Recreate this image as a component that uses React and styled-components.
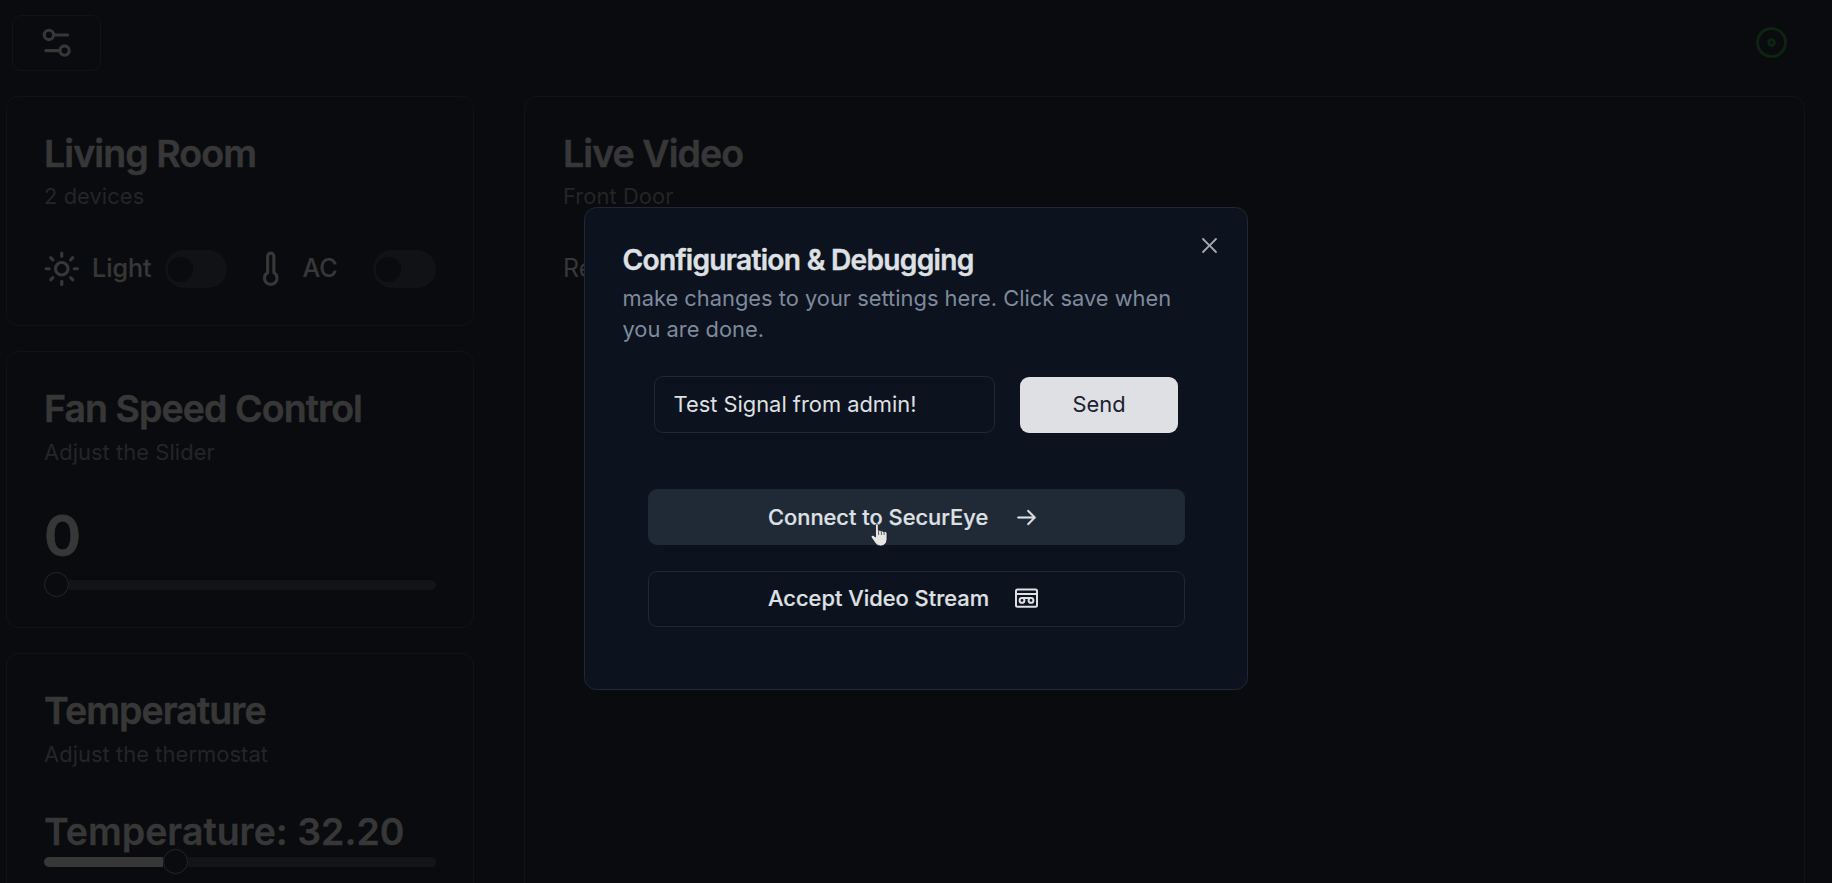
import React from "react";
import styled, { createGlobalStyle } from "styled-components";
import { Settings2, Sun, Thermometer } from "lucide-react";
import { RxCross2, RxArrowRight } from "react-icons/rx";

const Global = createGlobalStyle`
  * { box-sizing: border-box; }
  html, body { margin: 0; background: #0a0b0e; }
  body { font-family: Inter, "Liberation Sans", sans-serif; height: 883px; overflow: hidden; color: #373737; }
  button, input { font: inherit; color: inherit; }
`;

const Page = styled.div`
  height: 883px;
  overflow: hidden;
  padding: 15px 27px 0 6px;
`;
const TopBar = styled.header`
  display: flex;
  justify-content: space-between;
  align-items: flex-start;
  height: 81px;
  padding: 0 18px 0 6px;
`;
const MenuButton = styled.button`
  width: 89px;
  height: 56px;
  padding: 0;
  display: flex;
  align-items: center;
  justify-content: center;
  background: none;
  border: 1px solid #121316;
  border-radius: 9px;
`;
const Status = styled.svg`
  width: 31px;
  height: 31px;
  margin-top: 11.5px;
`;
const Columns = styled.main`
  display: flex;
  gap: 50px;
`;
const Sidebar = styled.div`
  width: 468px;
  display: flex;
  flex-direction: column;
  gap: 25px;
`;
const Card = styled.section`
  flex: ${(p) => (p.$grow ? 1 : "none")};
  height: ${(p) => p.$h}px;
  padding: 38px 37px 37px ${(p) => (p.$grow ? 38 : 37)}px;
  border: 1px solid #121316;
  border-radius: 12.5px;
`;
const Title = styled.h3`
  margin: 0;
  font-size: 37.5px;
  line-height: 38px;
  font-weight: 600;
  letter-spacing: -0.0245em;
  -webkit-text-stroke: 0.5px currentColor;
`;
const Subtitle = styled.p`
  margin: ${(p) => p.$mt || 9}px 0 0;
  font-size: 21.875px;
  line-height: 31px;
  letter-spacing: 0.08px;
  color: #242527;
`;
const Devices = styled.div`
  display: flex;
  align-items: center;
  height: 38px;
  margin-top: 38px;
`;
const LightIcon = styled(Sun)`
  margin-left: -1px;
`;
const DeviceName = styled.span`
  font-size: 25px;
  line-height: 37px;
  padding-bottom: 1px;
  font-weight: 500;
  -webkit-text-stroke: 0.2px currentColor;
  width: ${(p) => p.$w}px;
  margin-left: ${(p) => p.$ml}px;
`;
const Toggle = styled.span`
  width: ${(p) => p.$w}px;
  height: 38px;
  padding: 0 3px;
  display: flex;
  align-items: center;
  border-radius: 19px;
  background: #111215;
  margin-right: ${(p) => p.$mr || 0}px;
  &::before {
    content: "";
    width: 25px;
    height: 25px;
    border-radius: 50%;
    background: #0a0b0e;
  }
`;
const BigValue = styled.div`
  margin-top: 37px;
  font-size: 56.25px;
  line-height: 62.5px;
  font-weight: 600;
  -webkit-text-stroke: 0.8px currentColor;
`;
const Reading = styled.div`
  margin-top: 41px;
  font-size: 37.5px;
  line-height: 41px;
  font-weight: 600;
  -webkit-text-stroke: 0.3px currentColor;
`;
const Slider = styled.div`
  display: flex;
  align-items: center;
  height: 25px;
  margin-top: ${(p) => p.$mt}px;
`;
const Range = styled.span`
  width: ${(p) => p.$w}px;
  height: 10px;
  border-radius: 5px 0 0 5px;
  background: #373737;
`;
const Thumb = styled.span`
  width: 25px;
  height: 25px;
  border: 1px solid #242526;
  border-radius: 50%;
`;
const Rest = styled.span`
  flex: 1;
  height: 10px;
  border-radius: 0 5px 5px 0;
  background: #131416;
`;
const VideoNote = styled.div`
  margin-top: 37px;
  font-size: 25px;
  line-height: 38px;
`;

const Dialog = styled.div`
  position: absolute;
  left: 584px;
  top: 207px;
  width: 664px;
  height: 483px;
  padding: 37px 38px 38px 37.5px;
  background: #0c121e;
  border: 1px solid #202835;
  border-radius: 12.5px;
  color: #dfe0e3;
`;
const CloseButton = styled.button`
  position: absolute;
  top: 25px;
  right: 25px;
  width: 25px;
  height: 25px;
  padding: 0;
  border: 0;
  background: none;
  color: #a5a8ad;
  svg { display: block; }
`;
const DialogTitle = styled.h2`
  margin: 0;
  font-size: 28.125px;
  line-height: 31px;
  font-weight: 600;
  letter-spacing: -0.025em;
  -webkit-text-stroke: 0.4px currentColor;
`;
const DialogText = styled.p`
  margin: 7px 0 0;
  font-size: 21.875px;
  line-height: 31.25px;
  color: #7f8a9c;
`;
const SendRow = styled.div`
  display: flex;
  align-items: center;
  gap: 25px;
  margin: 30.5px 0 0 31.5px;
`;
const SignalInput = styled.input`
  width: 341px;
  height: 57px;
  padding: 0 18px 2px 18.5px;
  font-size: 21.875px;
  background: none;
  border: 1px solid #202835;
  border-radius: 9px;
  outline: none;
`;
const SendButton = styled.button`
  width: 158px;
  height: 56px;
  margin-top: 1px;
  padding: 0 0 2px;
  border: 0;
  border-radius: 9px;
  background: #dfe0e4;
  color: #1b2130;
  font-size: 21.875px;
`;
const Actions = styled.div`
  display: flex;
  flex-direction: column;
  gap: 26px;
  margin: 56px 0 0 25.5px;
`;
const ActionButton = styled.button`
  width: 537px;
  height: 56px;
  padding: 0 0 ${(p) => (p.$active ? 0 : 2)}px 119px;
  display: flex;
  align-items: center;
  gap: 25px;
  font-size: 21.875px;
  font-weight: 500;
  -webkit-text-stroke: 0.2px currentColor;
  white-space: nowrap;
  border: 1px solid #202835;
  border-radius: 9px;
  background: ${(p) => (p.$active ? "#202936" : "transparent")};
`;
const ArrowIcon = styled(RxArrowRight)`
  stroke: currentColor;
  stroke-width: 0.3px;
  margin-left: 1px;
`;
const Cursor = styled.svg`
  position: absolute;
  left: 870px;
  top: 523px;
  width: 18px;
  height: 24px;
`;

function CassetteIcon() {
  return (
    <svg width="25" height="25" viewBox="0 0 25 25" fill="none" stroke="currentColor" strokeWidth="2">
      <rect x="2" y="3.6" width="21" height="17.2" rx="1.5" />
      <path d="M2 8H23M8 12H17" />
      <circle cx="8" cy="14.4" r="2.4" />
      <circle cx="17" cy="14.4" r="2.4" />
    </svg>
  );
}

export default function App() {
  return (
    <>
      <Global />
      <Page>
        <TopBar>
          <MenuButton aria-label="Settings"><Settings2 size={37.5} /></MenuButton>
          <Status viewBox="0 0 31 31" fill="none" stroke="#0c2411" strokeWidth="3">
            <circle cx="15.5" cy="15.5" r="14" />
            <circle cx="15.5" cy="15.5" r="2.8" />
          </Status>
        </TopBar>
        <Columns>
          <Sidebar>
            <Card $h={230}>
              <Title>Living Room</Title>
              <Subtitle $mt={8}>2 devices</Subtitle>
              <Devices>
                <LightIcon size={37.5} />
                <DeviceName $ml={11.5} $w={73}>Light</DeviceName>
                <Toggle $w={62} $mr={25} />
                <Thermometer size={37.5} />
                <DeviceName $ml={13} $w={70.5}>AC</DeviceName>
                <Toggle $w={63} />
              </Devices>
            </Card>
            <Card $h={277}>
              <Title>Fan Speed Control</Title>
              <Subtitle>Adjust the Slider</Subtitle>
              <BigValue>0</BigValue>
              <Slider $mt={4.5}><Thumb /><Rest /></Slider>
            </Card>
            <Card $h={277}>
              <Title>Temperature</Title>
              <Subtitle>Adjust the thermostat</Subtitle>
              <Reading>Temperature: 32.20</Reading>
              <Slider $mt={-3}><Range $w={118.5} /><Thumb /><Rest /></Slider>
            </Card>
          </Sidebar>
          <Card $grow $h={900}>
            <Title>Live Video</Title>
            <Subtitle $mt={8}>Front Door</Subtitle>
            <VideoNote>Re</VideoNote>
          </Card>
        </Columns>
      </Page>
      <Dialog role="dialog">
        <CloseButton aria-label="Close"><RxCross2 size={25} /></CloseButton>
        <DialogTitle>Configuration &amp; Debugging</DialogTitle>
        <DialogText>make changes to your settings here. Click save when you are done.</DialogText>
        <SendRow>
          <SignalInput defaultValue="Test Signal from admin!" />
          <SendButton>Send</SendButton>
        </SendRow>
        <Actions>
          <ActionButton $active>Connect to SecurEye <ArrowIcon size={25} /></ActionButton>
          <ActionButton>Accept Video Stream <CassetteIcon /></ActionButton>
        </Actions>
      </Dialog>
      <Cursor viewBox="0 0 18 24">
        <path d="M5.5 2.2C5.5.2 8.3.2 8.3 2.2V7.2H10.2L10.4 7.8H12.6L12.9 8.5H15.2Q17 8.7 17 10.5V16.5Q16.5 22.8 10.5 23Q7 23 4.8 19.5L1 14Q1 11.8 3.3 12.3L5.5 14Z" fill="#e6e5e3" stroke="#111722" strokeWidth=".8" />
        <path d="M8.6 7.8V12M11.4 8.4V12M14.1 9V12" stroke="#3a404a" strokeWidth=".8" />
      </Cursor>
    </>
  );
}
